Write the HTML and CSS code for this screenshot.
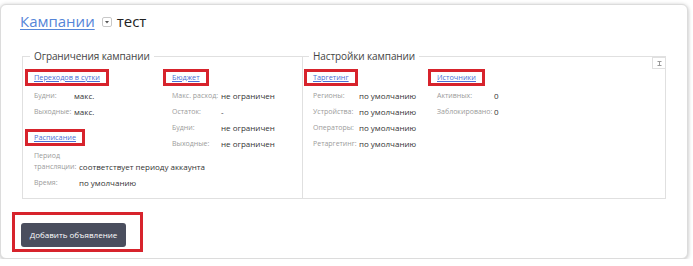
FILE: index.html
```html
<!DOCTYPE html>
<html lang="ru">
<head>
<meta charset="utf-8">
<title>Кампании — тест</title>
<link rel="stylesheet" href="styles.css">
</head>
<body>
<div class="card">
  <div class="title">
    <a class="title-link" href="#">Кампании</a>
    <span class="dd"><svg width="10" height="10" viewBox="0 0 10 10"><rect x="0.5" y="0.5" width="9" height="9" rx="1.5" fill="#fff" stroke="#c8c8c8"/><path d="M3 4h4L5 6.5z" fill="#555"/></svg></span>
    <span class="name">тест</span>
  </div>

  <div class="panels">
    <fieldset class="panel panel-limits">
      <legend>Ограничения кампании</legend>
      <div class="cols">
        <div class="col col-a">
          <div class="link-row"><a class="sub mark" href="#">Переходов в сутки</a></div>
          <div class="kv">
            <div class="kv-row"><span class="k k-a">Будни:</span><span class="v">макс.</span></div>
            <div class="kv-row"><span class="k k-a">Выходные:</span><span class="v">макс.</span></div>
          </div>
          <div class="link-row link-row-2"><a class="sub mark" href="#">Расписание</a></div>
          <div class="kv kv-sched">
            <div class="kv-row kv-row-tall"><span class="k k-s">Период трансляции:</span><span class="v">соответствует периоду аккаунта</span></div>
            <div class="kv-row"><span class="k k-s">Время:</span><span class="v">по умолчанию</span></div>
          </div>
        </div>
        <div class="col col-b">
          <div class="link-row"><a class="sub mark" href="#">Бюджет</a></div>
          <div class="kv">
            <div class="kv-row"><span class="k k-b">Макс. расход:</span><span class="v">не ограничен</span></div>
            <div class="kv-row"><span class="k k-b">Остаток:</span><span class="v">-</span></div>
            <div class="kv-row"><span class="k k-b">Будни:</span><span class="v">не ограничен</span></div>
            <div class="kv-row"><span class="k k-b">Выходные:</span><span class="v">не ограничен</span></div>
          </div>
        </div>
      </div>
    </fieldset>

    <fieldset class="panel panel-settings">
      <legend>Настройки кампании</legend>
      <button class="collapse" type="button" aria-label="Свернуть"><svg width="5" height="5" viewBox="0 0 5 5"><path d="M0.5 0.5h4M2.5 0.5v4M0.5 4.5h4" stroke="#999" stroke-width="1" fill="none"/></svg></button>
      <div class="cols">
        <div class="col col-c">
          <div class="link-row"><a class="sub mark" href="#">Таргетинг</a></div>
          <div class="kv">
            <div class="kv-row"><span class="k k-c">Регионы:</span><span class="v">по умолчанию</span></div>
            <div class="kv-row"><span class="k k-c">Устройства:</span><span class="v">по умолчанию</span></div>
            <div class="kv-row"><span class="k k-c">Операторы:</span><span class="v">по умолчанию</span></div>
            <div class="kv-row"><span class="k k-c">Ретаргетинг:</span><span class="v">по умолчанию</span></div>
          </div>
        </div>
        <div class="col col-d">
          <div class="link-row"><a class="sub mark" href="#">Источники</a></div>
          <div class="kv">
            <div class="kv-row"><span class="k k-d">Активных:</span><span class="v">0</span></div>
            <div class="kv-row"><span class="k k-d">Заблокировано:</span><span class="v">0</span></div>
          </div>
        </div>
      </div>
    </fieldset>
  </div>

  <div class="actions">
    <div class="mark-box"><button class="btn" type="button">Добавить объявление</button></div>
  </div>
</div>
</body>
</html>
```

FILE: styles.css
```css
* { box-sizing: border-box; }

html, body {
  margin: 0;
  padding: 0;
  background: #fff;
  font-family: "Open Sans", "Noto Sans", sans-serif;
  color: #333;
}

.card {
  width: 688px;
  height: 255px;
  margin-top: 4px;
  border: 1px solid #dcdcdc;
  border-radius: 6px;
  box-shadow: 0 1px 4px rgba(0, 0, 0, 0.28);
  padding: 5px 0 0 19px;
  background: #fff;
}

.title {
  display: flex;
  align-items: center;
  height: 23px;
  font-size: 15px;
  line-height: 23px;
}

.title-link {
  color: #5585d8;
  text-decoration: underline;
  text-decoration-thickness: 1px;
  text-underline-offset: 2px;
}

.dd {
  display: flex;
  margin: 1px 5px 0 7px;
}

.name {
  color: #222;
}

.panels {
  display: flex;
  margin-top: 16px;
  margin-left: 2px;
}

.panel {
  position: relative;
  margin: 0;
  min-width: 0;
  border: 1px solid #e0e0e0;
  padding: 0 10px 7px 11px;
}

.panel-limits {
  width: 280px;
  border-right: none;
}

.panel-settings {
  width: 364px;
  padding-left: 10px;
}

legend {
  font-size: 10px;
  letter-spacing: -0.1px;
  line-height: 15px;
  color: #444;
  padding: 0 4px;
  margin-left: -4px;
}

.collapse {
  position: absolute;
  top: -7px;
  right: -1px;
  width: 14px;
  height: 12px;
  padding: 0;
  border: 1px solid #e0e0e0;
  background: #fff;
  display: flex;
  align-items: center;
  justify-content: center;
}

.cols {
  display: flex;
  margin-top: 7.5px;
}

.col-a { width: 138px; }
.col-b { width: 120px; }
.col-c { width: 124px; }
.col-d { width: 120px; }

.link-row {
  display: flex;
  align-items: center;
  height: 11px;
}

.link-row-2 {
  margin-top: 12px;
}

.sub {
  display: block;
  font-size: 7.3px;
  line-height: 11px;
  color: #4a6fd4;
  text-decoration: underline;
  padding: 0 6px;
  margin-left: -6px;
}

.mark {
  outline: 3px solid #d7232c;
}

.kv {
  margin-top: 6px;
}

.kv-sched {
  margin-top: 7px;
}

.kv-row {
  display: flex;
  align-items: flex-end;
  height: 15.7px;
  line-height: 15.7px;
}

.kv-row-tall {
  height: 22px;
  line-height: 11px;
  margin-bottom: 3px;
}

.k {
  flex: none;
  font-size: 7px;
  color: #9b9b9b;
}

.k-a { width: 40px; }
.k-s { width: 45px; }
.k-b { width: 49px; }
.k-c { width: 46px; }
.k-d { width: 57px; }

.v {
  font-size: 8px;
  color: #333;
  white-space: nowrap;
}

.actions {
  margin-top: 13px;
}

.mark-box {
  display: inline-block;
  margin-left: -8px;
  border: 3px solid #d7232c;
  padding: 8px 14px 2px 6px;
}

.btn {
  display: block;
  height: 24px;
  width: 105px;
  padding: 0;
  border: none;
  border-radius: 3px;
  background: #4a4e5e;
  color: #fff;
  font-family: "Open Sans", "Noto Sans", sans-serif;
  font-size: 8px;
}
```
